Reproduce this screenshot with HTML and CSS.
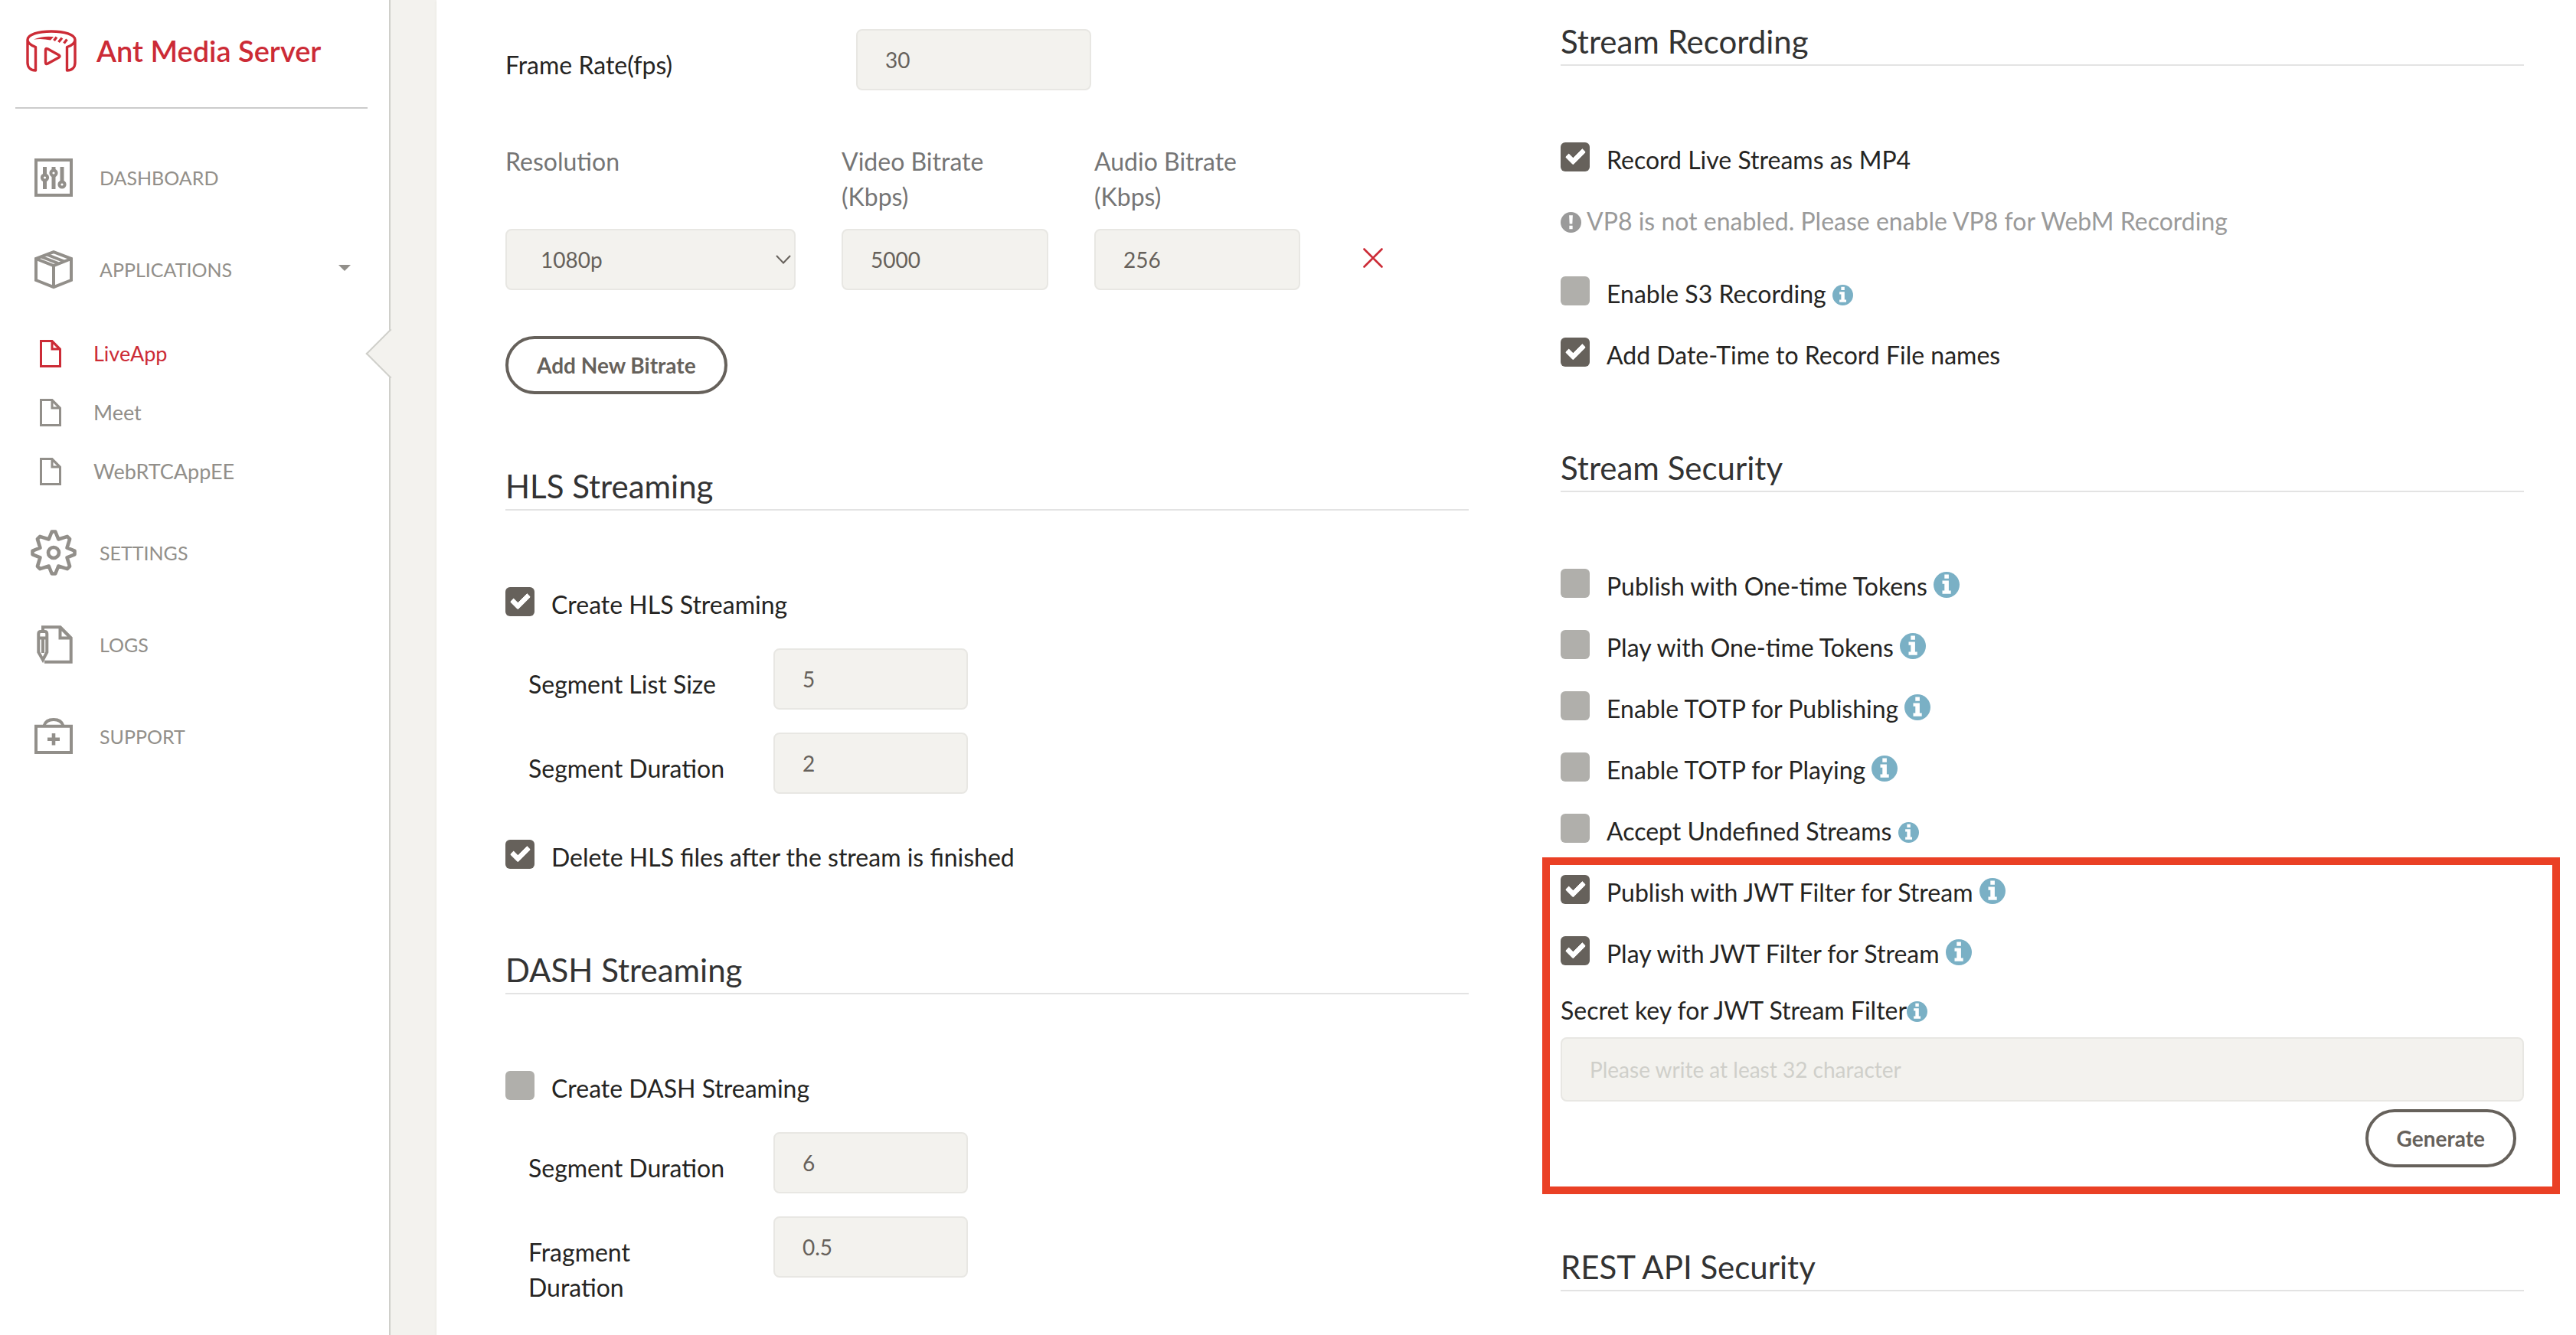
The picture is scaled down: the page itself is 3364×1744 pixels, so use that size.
FILE: index.html
```html
<!DOCTYPE html>
<html lang="en">
<head>
  <meta charset="utf-8">
  <meta name="viewport" content="width=device-width, initial-scale=1">
  <title>Ant Media Server</title>
  <link rel="stylesheet" href="styles.css">
</head>
<body>
  <svg class="sprite" aria-hidden="true">
    <symbol id="file" viewBox="0 0 28 36">
      <path d="M1.5 1.5H16L26.500 12V34.500H1.500z M16 1.500V12H26.500 M17 3L25 11" fill="none" stroke="currentColor" stroke-width="3"/>
    </symbol>
    <symbol id="info" viewBox="0 0 34 34">
      <circle cx="17" cy="17" r="17" fill="currentColor"/>
      <path d="M14.300 3.500h5.600v5.200h-5.600z M11.500 11.500h8.400v13h2.800v4.200H11.500v-4.200h2.800v-8.700h-2.800z" fill="#fff"/>
    </symbol>
  </svg>

  <div class="app">
    <aside class="sidebar">
      <a class="brand" href="#">
        <svg class="brand-logo" viewBox="0 0 84 70" fill="none" stroke="currentColor" stroke-width="3.400" stroke-linejoin="round" stroke-linecap="round" aria-hidden="true">
          <path d="M10 21C10 14 24 10 41 10S72 14 72 21C72 25 69 28 61.500 30.500V61C68 61 72 57 72 51V21M10 21C10 25 14 28 20.500 30.500V61C14 61 10 57 10 51V21"/>
          <path d="M33.500 34.500V50.500Q33.500 53.500 36.500 52L51 44Q53 42.500 51 41L36.500 33Q33.500 31.500 33.500 34.500z"/>
          <path d="M18 20.500Q29 15.500 44 17L40 21.500Q29 19 18 20.500z" fill="currentColor" stroke="none"/>
          <path d="M48 17.500L44.500 22M55 18.500L50.500 24M61.500 20.500L57.500 25.500" stroke-linecap="butt"/>
        </svg>
        <span>Ant Media Server</span>
      </a>
      <nav class="nav">
        <a class="nav-link" href="#">
          <svg class="nav-icon" viewBox="0 0 60 60" fill="none" stroke="currentColor" stroke-width="4" aria-hidden="true">
            <path d="M7 7H53V53H7z"/>
            <path d="M18.500 16V26M18.500 34V45M30 16V20M30 28V45M41 16V35" stroke-width="5"/>
            <circle cx="18.500" cy="30" r="3.600"/><circle cx="30" cy="24" r="3.600"/><circle cx="41" cy="39" r="3.600"/>
          </svg>
          <span>DASHBOARD</span>
        </a>
        <a class="nav-link" href="#">
          <svg class="nav-icon" viewBox="0 0 60 60" fill="none" stroke="currentColor" stroke-width="4" aria-hidden="true">
            <path d="M30 7.200L53 16V44L30 53L7 44V16z M7 16L30 25L53 16M30 25V53"/>
            <path d="M14 13.500L36 22M21 10.500L44 19.500"/>
          </svg>
          <span>APPLICATIONS</span>
          <i class="caret"></i>
        </a>
        <ul class="subnav">
          <li><a class="subnav-link is-active" href="#"><svg class="subnav-icon" aria-hidden="true"><use href="#file"/></svg>LiveApp</a></li>
          <li><a class="subnav-link" href="#"><svg class="subnav-icon" aria-hidden="true"><use href="#file"/></svg>Meet</a></li>
          <li><a class="subnav-link" href="#"><svg class="subnav-icon" aria-hidden="true"><use href="#file"/></svg>WebRTCAppEE</a></li>
        </ul>
        <a class="nav-link" href="#">
          <svg class="nav-icon" viewBox="-30 -30 60 60" fill="none" stroke="currentColor" stroke-width="4.600" stroke-linejoin="round" aria-hidden="true">
            <path d="M-2.300-27.500H2.300L6.300-17.500L17.800-21.100L21.100-17.800L17.500-6.300L27.500-2.300V2.300L17.500 6.300L21.100 17.800L17.800 21.100L6.300 17.500L2.300 27.500H-2.300L-6.300 17.500L-17.800 21.100L-21.100 17.800L-17.500 6.300L-27.500 2.300V-2.300L-17.500-6.300L-21.100-17.800L-17.800-21.100L-6.300-17.500z"/>
            <circle r="7"/>
          </svg>
          <span>SETTINGS</span>
        </a>
        <a class="nav-link" href="#">
          <svg class="nav-icon" viewBox="0 0 60 60" fill="none" stroke="currentColor" stroke-width="4" aria-hidden="true">
            <path d="M16 12V7.300H38.700L52.700 21.300V52.700H18M38.500 7.300V21.500H52.700M39 8L52 21"/>
            <path d="M10.300 40V16q0-3 3-3h5q3 0 3 3V40L16 50z M10 21.500H21.500M16 23V41"/>
          </svg>
          <span>LOGS</span>
        </a>
        <a class="nav-link" href="#">
          <svg class="nav-icon" viewBox="0 0 60 60" fill="none" stroke="currentColor" stroke-width="4" aria-hidden="true">
            <path d="M7 16.700H53V51H7z M17.500 16Q20 8 30 8T42.500 16"/>
            <path d="M30 26V41.500M22 33.700H38" stroke-width="4.600"/>
          </svg>
          <span>SUPPORT</span>
        </a>
      </nav>
      <div class="notch"></div>
    </aside>

    <main class="card">
      <form class="columns">
        <div class="column">
          <div class="rate">
            <label class="field-label" for="fps">Frame Rate(fps)</label>
            <input class="field" id="fps" type="text" value="30">
          </div>
          <div class="bitrates">
            <label class="bitrate-label" for="resolution">Resolution</label>
            <label class="bitrate-label" for="video">Video Bitrate (Kbps)</label>
            <label class="bitrate-label" for="audio">Audio Bitrate (Kbps)</label>
            <span></span>
            <div class="select">
              <select class="field" id="resolution"><option>1080p</option></select>
              <svg class="select-arrow" viewBox="0 0 20 12" aria-hidden="true"><path d="M1 1L10 10.500L19 1" fill="none" stroke="currentColor" stroke-width="2"/></svg>
            </div>
            <input class="field" id="video" type="text" value="5000">
            <input class="field" id="audio" type="text" value="256">
            <button class="remove" type="button" aria-label="Remove bitrate">
              <svg viewBox="0 0 26 26" aria-hidden="true"><path d="M1.500 1.500L24.500 24.500M24.500 1.500L1.500 24.500" stroke="currentColor" stroke-width="2.600" stroke-linecap="round"/></svg>
            </button>
          </div>
          <button class="pill" type="button">Add New Bitrate</button>

          <section class="section">
            <h4 class="heading">HLS Streaming</h4>
            <div class="check"><input type="checkbox" id="hls" checked><label for="hls">Create HLS Streaming</label></div>
            <div class="setting"><label class="field-label" for="hls-size">Segment List Size</label><input class="field" id="hls-size" type="text" value="5"></div>
            <div class="setting"><label class="field-label" for="hls-duration">Segment Duration</label><input class="field" id="hls-duration" type="text" value="2"></div>
            <div class="check check-after"><input type="checkbox" id="hls-delete" checked><label for="hls-delete">Delete HLS files after the stream is finished</label></div>
          </section>

          <section class="section">
            <h4 class="heading">DASH Streaming</h4>
            <div class="check"><input type="checkbox" id="dash"><label for="dash">Create DASH Streaming</label></div>
            <div class="setting"><label class="field-label" for="dash-duration">Segment Duration</label><input class="field" id="dash-duration" type="text" value="6"></div>
            <div class="setting"><label class="field-label" for="dash-fragment">Fragment Duration</label><input class="field" id="dash-fragment" type="text" value="0.5"></div>
          </section>
        </div>

        <div class="column column-right">
          <section class="section">
            <h4 class="heading">Stream Recording</h4>
            <div class="check"><input type="checkbox" id="mp4" checked><label for="mp4">Record Live Streams as MP4</label></div>
            <p class="note"><svg class="note-icon" viewBox="0 0 34 34" aria-hidden="true"><circle cx="17" cy="17" r="17" fill="currentColor"/><path d="M14 5.500h6l-.7 14h-4.600z M14.300 22.500h5.400v5.400h-5.400z" fill="#fff"/></svg> VP8 is not enabled. Please enable VP8 for WebM Recording</p>
            <div class="check"><input type="checkbox" id="s3"><label for="s3">Enable S3 Recording <svg class="info" aria-hidden="true"><use href="#info"/></svg></label></div>
            <div class="check"><input type="checkbox" id="datetime" checked><label for="datetime">Add Date-Time to Record File names</label></div>
          </section>

          <section class="section">
            <h4 class="heading">Stream Security</h4>
            <div class="check"><input type="checkbox" id="pub-token"><label for="pub-token">Publish with One-time Tokens <svg class="info info-large" aria-hidden="true"><use href="#info"/></svg></label></div>
            <div class="check"><input type="checkbox" id="play-token"><label for="play-token">Play with One-time Tokens <svg class="info info-large" aria-hidden="true"><use href="#info"/></svg></label></div>
            <div class="check"><input type="checkbox" id="pub-totp"><label for="pub-totp">Enable TOTP for Publishing <svg class="info info-large" aria-hidden="true"><use href="#info"/></svg></label></div>
            <div class="check"><input type="checkbox" id="play-totp"><label for="play-totp">Enable TOTP for Playing <svg class="info info-large" aria-hidden="true"><use href="#info"/></svg></label></div>
            <div class="check"><input type="checkbox" id="undefined"><label for="undefined">Accept Undefined Streams <svg class="info" aria-hidden="true"><use href="#info"/></svg></label></div>
            <div class="jwt">
              <div class="check"><input type="checkbox" id="pub-jwt" checked><label for="pub-jwt">Publish with JWT Filter for Stream <svg class="info info-large" aria-hidden="true"><use href="#info"/></svg></label></div>
              <div class="check"><input type="checkbox" id="play-jwt" checked><label for="play-jwt">Play with JWT Filter for Stream <svg class="info info-large" aria-hidden="true"><use href="#info"/></svg></label></div>
              <label class="secret-label" for="secret">Secret key for JWT Stream Filter<svg class="info" aria-hidden="true"><use href="#info"/></svg></label>
              <input class="field field-tall" id="secret" type="text" placeholder="Please write at least 32 character">
              <button class="pill pill-right" type="button">Generate</button>
            </div>
          </section>

          <section class="section">
            <h4 class="heading">REST API Security</h4>
          </section>
        </div>
      </form>
    </main>
  </div>
</body>
</html>
```
FILE: styles.css
```css
* {
  box-sizing: border-box;
}

body {
  margin: 0;
  background: #f3f2ee;
  color: #252422;
  font-family: Lato, "Liberation Sans", sans-serif;
  font-size: 32px;
  line-height: 46px;
}

a {
  color: inherit;
  text-decoration: none;
}

.sprite {
  display: none;
}

.app {
  display: flex;
  gap: 60px;
  min-height: 100vh;
}

/* Sidebar */

.sidebar {
  position: relative;
  flex: none;
  width: 510px;
  background: #fff;
  border-right: 2px solid #cfcfca;
  color: #928f8a;
}

.brand {
  display: flex;
  align-items: center;
  gap: 16px;
  height: 142px;
  margin: 0 28px 0 20px;
  padding: 0 0 8px 6px;
  border-bottom: 2px solid #cccccc;
  color: #cc2b36;
  font-size: 38px;
  font-weight: 600;
}

.brand-logo {
  width: 84px;
  height: 70px;
}

.nav {
  padding-top: 30px;
}

.nav-link {
  display: flex;
  align-items: center;
  gap: 30px;
  height: 120px;
  padding: 0 50px 0 40px;
  font-size: 25px;
}

.nav-icon {
  width: 60px;
  height: 60px;
}

.caret {
  margin: 0 0 4px auto;
  border: 8px solid transparent;
  border-top-color: currentColor;
  border-bottom: 0;
}

.subnav {
  margin: 0;
  padding: 11px 0 8px;
  list-style: none;
}

.subnav-link {
  display: flex;
  align-items: center;
  gap: 42px;
  height: 77px;
  padding-left: 52px;
  font-size: 27px;
}

.subnav-icon {
  width: 28px;
  height: 36px;
}

.is-active {
  color: #cc2b36;
}

/* Arrow cut into the sidebar edge beside the open application */
.notch {
  position: absolute;
  top: 439px;
  right: -25px;
  width: 46px;
  height: 46px;
  background: #f3f2ee;
  border: solid #cfcfca;
  border-width: 0 0 2px 2px;
  transform: rotate(45deg);
}

/* Settings card */

.card {
  flex: 1;
  min-width: 0;
  padding: 0 68px 0 90px;
  background: #fff;
  box-shadow: 0 2px 2px rgba(204, 197, 185, 0.5);
}

.columns {
  display: grid;
  grid-template-columns: 1fr 1fr;
  gap: 120px;
}

.column {
  padding-top: 38px;
}

.column-right {
  padding-top: 24px;
}

.section + .section {
  margin-top: 94px;
}

.pill + .section {
  margin-top: 90px;
}

.heading {
  margin: 0 0 100px;
  border-bottom: 2px solid #e3e3e3;
  color: #333333;
  font-size: 42px;
  font-weight: 400;
  line-height: 60px;
}

.heading:last-child {
  margin-bottom: 0;
}

.field {
  width: 100%;
  height: 80px;
  padding: 0 36px;
  background: #f3f2ee;
  border: 2px solid #e8e7e3;
  border-radius: 8px;
  color: #66615b;
  font: inherit;
  font-size: 28px;
}

.field::placeholder {
  color: #cfcfca;
}

.field-tall {
  height: 84px;
}

.field-label {
  padding-top: 24px;
}

.rate {
  display: grid;
  grid-template-columns: 398px 307px;
  column-gap: 60px;
  align-items: start;
}

.bitrates {
  display: grid;
  grid-template-columns: 379px 270px 269px 1fr;
  gap: 19px 60px;
  margin: 70px 0 60px;
}

.bitrate-label {
  padding-right: 60px;
  color: #757575;
}

.select {
  display: grid;
  align-items: center;
}

.select > * {
  grid-area: 1 / 1;
}

.select .field {
  appearance: none;
  padding-left: 44px;
}

.select-arrow {
  justify-self: end;
  width: 20px;
  height: 12px;
  margin-right: 6px;
  color: #66615b;
  pointer-events: none;
}

.remove {
  display: flex;
  align-items: center;
  padding: 0 0 4px 22px;
  background: none;
  border: 0;
  color: #cc2b36;
}

.remove svg {
  width: 26px;
  height: 26px;
}

.pill {
  display: block;
  height: 76px;
  padding: 0 37px;
  background: #fff;
  border: 4px solid #66615b;
  border-radius: 38px;
  color: #66615b;
  font: inherit;
  font-size: 28px;
  font-weight: 700;
}

.pill-right {
  margin: 10px 10px 0 auto;
}

.check {
  display: flex;
  align-items: flex-start;
  gap: 22px;
  margin-bottom: 34px;
}

.check input {
  appearance: none;
  display: grid;
  place-items: center;
  flex: none;
  width: 38px;
  height: 38px;
  margin: 0;
  background: #b0afab;
  border-radius: 6px;
}

.check input:checked {
  background: #66615b;
}

.check input:checked::after {
  content: "";
  box-sizing: border-box;
  width: 15px;
  height: 24px;
  margin-bottom: 6px;
  border: solid #fff;
  border-width: 0 7px 7px 0;
  border-radius: 2px;
  transform: rotate(45deg);
}

.setting {
  display: grid;
  grid-template-columns: 262px 254px;
  column-gap: 58px;
  align-items: start;
  height: 80px;
  margin: 0 0 30px 30px;
}

.check-after {
  margin: 60px 0 0;
}

.note {
  margin: 0 0 49px;
  color: #9a9a9a;
}

.note-icon,
.info {
  width: 27px;
  height: 27px;
  vertical-align: -3px;
}

.info {
  color: #7ab0c5;
}

.info-large {
  width: 34px;
  height: 34px;
}

.secret-label {
  display: block;
  margin: -6px 0 12px;
}

/* Highlight frame drawn over the JWT options */
.jwt {
  position: relative;
  margin-bottom: 100px;
}

.jwt::after {
  content: "";
  position: absolute;
  inset: -23px -47px -35px -24px;
  border: 10px solid #ea4025;
  pointer-events: none;
}
```
